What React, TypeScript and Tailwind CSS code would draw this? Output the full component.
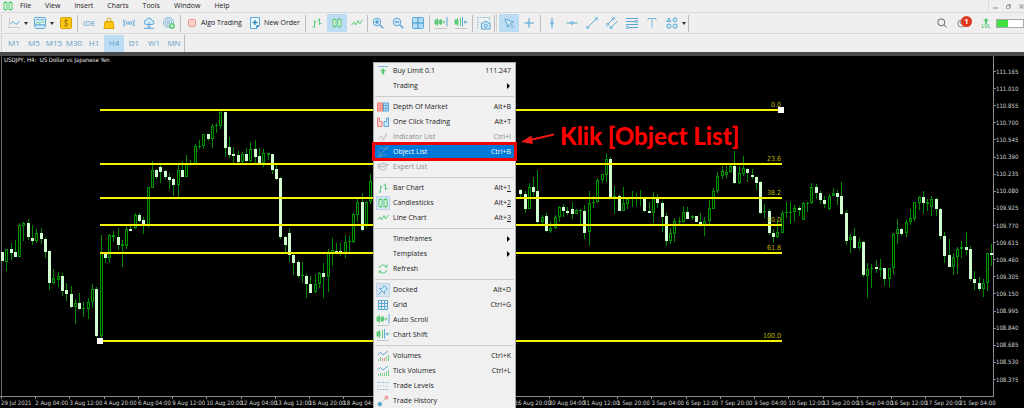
import type { ReactNode } from 'react';
import clsx from 'clsx';

// [high, low, body top, body bottom, falling]
type Candle = [number, number, number, number, 0 | 1];

const STEP = 4.283;
const PLOT_TOP = 56;
const HIDDEN = 34;

const firstCandles: Candle[] = [
  [252, 261, 252, 261, 1], [249, 271, 249, 262, 0], [243, 260, 249, 253, 1], [240, 257, 252, 257, 1],
  [223, 257, 225, 257, 0], [222, 241, 223, 226, 0], [219, 240, 223, 237, 1], [225, 245, 238, 241, 1],
  [229, 243, 233, 241, 0], [228, 244, 233, 239, 1], [237, 258, 239, 252, 1], [250, 290, 251, 283, 1],
  [269, 284, 278, 283, 0], [272, 287, 276, 280, 0], [273, 296, 276, 291, 1], [283, 301, 290, 294, 1],
  [286, 308, 294, 307, 1], [299, 324, 303, 307, 0], [293, 310, 303, 309, 1], [302, 317, 308, 309, 0],
  [298, 319, 302, 309, 0], [284, 308, 289, 302, 0], [287, 337, 289, 336, 1], [235, 338, 253, 336, 0],
  [252, 263, 253, 258, 1], [234, 263, 235, 258, 0], [231, 242, 235, 237, 0], [228, 250, 237, 245, 1],
  [240, 267, 244, 246, 0], [226, 249, 229, 246, 0], [225, 231, 229, 231, 1], [213, 229, 215, 228, 0],
  [213, 222, 215, 221, 1], [217, 234, 220, 225, 1], [187, 228, 187, 225, 0], [161, 188, 170, 188, 0],
  [169, 179, 170, 177, 1], [164, 183, 167, 172, 1], [170, 179, 171, 177, 1], [173, 189, 177, 180, 1],
  [178, 196, 179, 185, 1], [163, 197, 170, 185, 0], [161, 177, 170, 177, 1], [155, 177, 164, 177, 0],
  [160, 166, 163, 164, 0], [144, 164, 146, 164, 0], [140, 149, 146, 147, 0], [134, 149, 134, 146, 0],
  [134, 141, 134, 139, 1], [124, 148, 126, 139, 0], [123, 133, 125, 126, 0], [111, 129, 112, 126, 0],
  [112, 157, 112, 148, 1], [137, 158, 147, 155, 1], [147, 163, 154, 156, 1], [151, 164, 155, 162, 1],
  [152, 163, 154, 162, 0], [148, 162, 154, 161, 1], [142, 162, 149, 161, 0], [140, 163, 149, 157, 1],
  [148, 164, 156, 163, 1], [149, 167, 153, 163, 0], [153, 160, 153, 155, 0], [154, 174, 154, 170, 1],
  [165, 180, 169, 179, 1], [177, 239, 178, 237, 1], [236, 252, 237, 245, 1], [228, 262, 233, 255, 1],
  [253, 275, 255, 263, 1], [260, 278, 262, 276, 1], [262, 283, 275, 276, 0], [274, 298, 276, 284, 1],
  [276, 293, 284, 293, 1], [274, 293, 284, 292, 0], [272, 288, 273, 284, 0], [263, 298, 273, 277, 1],
  [249, 292, 252, 277, 0], [238, 266, 250, 253, 0], [243, 254, 251, 254, 1], [243, 256, 251, 254, 1],
  [235, 258, 242, 254, 0], [236, 253, 241, 242, 0], [213, 243, 214, 242, 0], [199, 222, 202, 215, 0],
  [193, 231, 202, 230, 1], [201, 228, 202, 226, 0], [174, 204, 181, 202, 0],
];

const lastCandles: Candle[] = [
  [189, 197, 190, 194, 1], [191, 213, 194, 209, 1], [183, 209, 187, 209, 0], [177, 196, 187, 192, 1],
  [170, 223, 191, 222, 1], [215, 225, 217, 222, 0], [213, 232, 216, 231, 1], [222, 233, 228, 231, 0],
  [215, 229, 217, 228, 0], [206, 222, 207, 217, 0], [204, 217, 207, 211, 1], [207, 215, 211, 213, 1],
  [202, 219, 209, 214, 1], [209, 214, 210, 214, 0], [209, 225, 210, 211, 0], [205, 239, 211, 233, 1],
  [191, 246, 203, 232, 0], [196, 208, 202, 203, 0], [178, 203, 180, 202, 0], [174, 183, 174, 180, 0],
  [153, 182, 159, 175, 0], [157, 198, 159, 198, 1], [186, 214, 196, 198, 0], [194, 211, 196, 211, 1],
  [187, 211, 203, 211, 0], [198, 209, 199, 204, 0], [191, 207, 198, 199, 0], [193, 206, 198, 199, 0],
  [190, 206, 198, 199, 0], [198, 212, 199, 211, 1], [202, 213, 211, 213, 1], [192, 223, 197, 213, 0],
  [194, 208, 197, 203, 1], [201, 232, 203, 217, 1], [213, 246, 216, 241, 1], [228, 244, 233, 241, 0],
  [218, 242, 221, 234, 0], [217, 224, 221, 222, 0], [206, 223, 212, 222, 0], [207, 219, 212, 219, 1],
  [215, 220, 216, 218, 0], [216, 222, 216, 222, 1], [213, 227, 222, 224, 1], [217, 236, 221, 225, 0],
  [200, 224, 208, 221, 0], [188, 209, 191, 209, 0], [172, 193, 176, 191, 0], [166, 179, 171, 176, 0],
  [166, 178, 172, 175, 0], [165, 173, 166, 172, 0], [151, 184, 166, 183, 1], [166, 184, 173, 183, 0],
  [156, 176, 168, 174, 0], [168, 182, 169, 173, 1], [169, 179, 175, 177, 1], [176, 190, 177, 183, 1],
  [181, 214, 182, 213, 1], [204, 218, 211, 212, 0], [209, 235, 211, 233, 1], [229, 243, 233, 237, 1],
  [220, 238, 232, 237, 0], [211, 233, 213, 233, 0], [202, 218, 212, 213, 0], [202, 224, 212, 213, 0],
  [205, 222, 208, 212, 0], [206, 216, 208, 210, 1], [202, 220, 203, 220, 0], [202, 212, 203, 204, 0],
  [183, 204, 187, 203, 0], [184, 199, 187, 193, 1], [191, 204, 193, 200, 1], [196, 208, 200, 204, 1],
  [194, 210, 196, 209, 0], [188, 196, 193, 196, 0], [190, 205, 193, 197, 1], [182, 215, 196, 214, 1],
  [210, 245, 213, 241, 1], [234, 253, 237, 240, 0], [228, 249, 236, 248, 1], [238, 250, 242, 248, 0],
  [241, 277, 242, 275, 1], [263, 298, 269, 276, 0], [264, 288, 268, 269, 0], [260, 273, 267, 269, 1],
  [259, 277, 268, 270, 0], [268, 286, 268, 279, 1], [268, 287, 268, 279, 0], [233, 275, 234, 268, 0],
  [219, 244, 229, 234, 0], [228, 236, 229, 234, 1], [220, 237, 222, 233, 0], [209, 225, 218, 222, 0],
  [202, 221, 202, 219, 0], [196, 210, 197, 203, 0], [191, 214, 197, 203, 1], [199, 211, 202, 204, 0],
  [196, 216, 199, 207, 0], [198, 216, 199, 209, 1], [208, 239, 209, 236, 1], [232, 263, 236, 256, 1],
  [239, 267, 255, 267, 1], [253, 275, 257, 267, 0], [247, 274, 249, 257, 0], [241, 258, 247, 249, 0],
  [232, 255, 247, 250, 1], [246, 281, 249, 279, 1], [271, 290, 279, 283, 1], [277, 291, 283, 289, 1],
  [279, 297, 283, 289, 0], [253, 291, 253, 283, 0], [244, 266, 253, 255, 1],
];

const fibLevels = [
  { label: '0.0', y: 110 },
  { label: '23.6', y: 164 },
  { label: '38.2', y: 198 },
  { label: '50.0', y: 225 },
  { label: '61.8', y: 253 },
  { label: '100.0', y: 341 },
];

const prices = [
  '111.165', '111.010', '110.855', '110.700', '110.545', '110.390', '110.235', '110.080', '109.925', '109.770',
  '109.615', '109.460', '109.305', '109.150', '108.995', '108.840', '108.685', '108.530', '108.375',
];

// the empty slots lie under the context menu
const times = [
  '29 Jul 2021', '2 Aug 04:00', '3 Aug 12:00', '4 Aug 20:00', '6 Aug 04:00', '9 Aug 12:00', '10 Aug 20:00',
  '12 Aug 04:00', '13 Aug 12:00', '16 Aug 20:00', '18 Aug 04:00', '', '', '',
  '', '26 Aug 20:00', '30 Aug 04:00', '31 Aug 12:00', '1 Sep 20:00', '3 Sep 04:00', '6 Sep 12:00',
  '7 Sep 20:00', '9 Sep 04:00', '10 Sep 12:00', '13 Sep 20:00', '15 Sep 04:00', '16 Sep 12:00', '17 Sep 20:00',
  '21 Sep 04:00',
];

const BLUE = '#5aa8d6';
const GREEN = '#5cca78';
const PALE = '#d3e9f8';

function Svg({ children, size = 12, stroke = BLUE }: { children: ReactNode; size?: 12 | 14; stroke?: string }) {
  return (
    <svg
      viewBox={size === 14 ? '0 0 14 14' : '0 0 12 12'}
      className={size === 14 ? 'size-[14px] shrink-0' : 'size-3 shrink-0'}
      fill="none"
      stroke={stroke}
      strokeWidth="1"
      aria-hidden="true"
    >
      {children}
    </svg>
  );
}

const icons = {
  lineChart: (
    <Svg>
      <path d="M1.500 1v10M0 10.500h12" stroke="#c3c3c3" strokeWidth=".8" />
      <path d="M2.500 7 5 4.500 8 7.500 11.500 4.500" />
    </Svg>
  ),
  screen: (
    <Svg size={14}>
      <rect x="1.500" y="1.500" width="11" height="7.500" rx="1" fill="#e4f3fc" />
      <path d="M2.500 4.500 5 3l2 1.500L9 3l2.500 1" />
      <path d="M2.500 7.500 5 6l2 1.500 2-2 2.500 1" stroke={GREEN} />
      <path d="M1.500 9c0 2.500 1 3.500 2.500 3.500h6c1.500 0 2.500-1 2.500-3.500z" fill={PALE} />
    </Svg>
  ),
  dollar: (
    <Svg stroke="#d9a400">
      <rect x=".5" y=".5" width="11" height="11" rx="1" fill="#fbc614" />
      <path d="M8 3.800C7.500 3 4.200 2.800 4.200 4.600 4.200 6.200 8 5.600 8 7.400 8 9.200 4.500 9 4 8M6 2v8" stroke="#a37c0a" strokeWidth=".9" />
    </Svg>
  ),
  bag: (
    <Svg stroke="#dba50a">
      <path d="M2 4.500h8l1 7H1z" fill="#fdc60f" />
      <path d="M4 6V3a2 2 0 0 1 4 0v3" />
    </Svg>
  ),
  signal: (
    <Svg>
      <circle cx="6" cy="6" r="1.200" />
      <path d="M4 4a3 3 0 0 0 0 4M8 4a3 3 0 0 1 0 4M2.300 3a5 5 0 0 0 0 6M9.700 3a5 5 0 0 1 0 6M.7 2.500a7 7 0 0 0 0 7M11.300 2.500a7 7 0 0 1 0 7" strokeWidth=".8" />
    </Svg>
  ),
  cloud: (
    <Svg>
      <path d="M3 7.500a2.300 2.300 0 0 1 0-4.500 3.200 3.200 0 0 1 6 .5 2 2 0 0 1 0 4z" fill={PALE} />
      <path d="M6 5.500V11M1 11.300h10M4.500 9.500 6 11l1.500-1.500" />
    </Svg>
  ),
  radar: (
    <Svg>
      <circle cx="5.500" cy="5.500" r="5" strokeWidth=".8" />
      <circle cx="5.500" cy="5.500" r="3" strokeWidth=".8" />
      <circle cx="5.500" cy="5.500" r="1" />
      <circle cx="9" cy="9" r="2.600" fill="#5fd47a" stroke="#43b85f" strokeWidth=".6" />
      <path d="M7.500 9h3M9 7.500v3" stroke="#fff" />
    </Svg>
  ),
  stop: (
    <Svg stroke="#e9978c">
      <rect x="2.500" y="2.500" width="7" height="7" rx="1" fill="#fbd0ca" />
    </Svg>
  ),
  newOrder: (
    <Svg>
      <path d="M1.500.5h9v8l-3 3h-6z" fill="#f2f9fe" />
      <path d="M3.500 5.500h5M6 3v5" strokeWidth="1.300" stroke="#2a84bd" />
      <path d="M7.500 11.500v-3h3z" fill="#2a84bd" />
    </Svg>
  ),
  bars: (
    <Svg stroke={GREEN}>
      <path d="M3.500 3.500v7M1.500 10h2M3.500 5h2M8.500 1.500v6.500M6.500 3h2M8.500 6.500h2" />
    </Svg>
  ),
  candles: (
    <Svg stroke={GREEN}>
      <path d="M3.500 1v10M8.500 1v10" />
      <rect x="2" y="2.500" width="3" height="7" fill="#d8f3df" />
      <rect x="7" y="2.500" width="3" height="7" fill="#d8f3df" />
    </Svg>
  ),
  zigzag: (
    <Svg stroke={GREEN}>
      <path d="M.5 8 3 5l1.500 3L7 3.500 8.500 7l3-4" />
    </Svg>
  ),
  zoomIn: (
    <Svg>
      <circle cx="5" cy="5" r="3.800" fill={PALE} />
      <path d="M8 8l3.300 3.300" strokeWidth="1.600" />
      <path d="M3 5h4M5 3v4" stroke="#2a84bd" />
    </Svg>
  ),
  zoomOut: (
    <Svg>
      <circle cx="5" cy="5" r="3.800" fill={PALE} />
      <path d="M8 8l3.300 3.300" strokeWidth="1.600" />
      <path d="M3 5h4" stroke="#2a84bd" />
    </Svg>
  ),
  tiles: (
    <Svg>
      <rect x=".5" y=".5" width="11" height="11" rx="1" fill="#b5dcf5" />
      <path d="M6 .5v11M.5 6h11" stroke="#3f93c8" />
    </Svg>
  ),
  autoScroll: (
    <Svg size={14} stroke={GREEN}>
      <path d="M1.500 3.500v5M3.500 2v8M6.500 3v6" />
      <path d="M1 4h3v4H1zM5.500 4h2v4h-2z" fill={GREEN} />
      <path d="M8 6h3M9.500 4.500 11 6 9.500 7.500" strokeWidth=".9" />
      <path d="M13 1v9.500" stroke={BLUE} />
      <path d="M1 12.500h12" stroke="#c6c6c6" />
    </Svg>
  ),
  chartShift: (
    <Svg size={14} stroke={GREEN}>
      <path d="M1.500 3.500v5M3.500 2v8M6.500 2v8" />
      <path d="M1 4h3v4H1z" fill={GREEN} />
      <path d="M8.500 1v9.500M13.500 6H10M11.500 4.500 10 6l1.500 1.500" stroke={BLUE} />
      <path d="M1 12.500h12" stroke="#c6c6c6" />
    </Svg>
  ),
  camera: (
    <Svg size={14}>
      <path d="M.8 12.500V1.500h12V5" strokeDasharray="1.500 1.200" strokeWidth=".8" />
      <path d="M4.500 7h2l1-1.500h2.500l1 1.500h2v6h-8.500z" fill={PALE} />
      <circle cx="8.800" cy="9.800" r="1.600" />
    </Svg>
  ),
  cursor: (
    <Svg>
      <path d="M2 2l8.500 3-3.200 1.300L10.500 9.500 9.300 10.700 6.200 7.500 5 10.500z" fill={PALE} />
    </Svg>
  ),
  crosshair: (
    <Svg>
      <path d="M6 1v10M1 6h10" />
      <circle cx="6" cy="6" r="1.200" fill={PALE} />
    </Svg>
  ),
  vline: (
    <Svg>
      <path d="M6 .5v11" />
      <circle cx="6" cy="6" r="1.300" fill={PALE} />
    </Svg>
  ),
  hline: (
    <Svg>
      <path d="M.5 6h11" />
      <circle cx="6" cy="6" r="1.300" fill={PALE} />
    </Svg>
  ),
  trend: (
    <Svg>
      <path d="M1.500 10.500l9-9" />
      <circle cx="1.500" cy="10.500" r="1.100" fill={PALE} />
      <circle cx="10.500" cy="1.500" r="1.100" fill={PALE} />
    </Svg>
  ),
  channel: (
    <Svg>
      <path d="M1.500 7.500l6-6M5 10.500 11.500 4" />
      <circle cx="1.500" cy="7.500" r="1.100" fill={PALE} />
      <circle cx="7.500" cy="1.500" r="1.100" fill={PALE} />
      <circle cx="5" cy="10.500" r="1.100" fill={PALE} />
    </Svg>
  ),
  fib: (
    <Svg>
      <path d="M0 1.500h12M0 4.500h9M0 7.500h12M3 10.500h9" />
      <circle cx="10.500" cy="4.500" r="1.200" fill={PALE} />
      <circle cx="1.500" cy="10.500" r="1.200" fill={PALE} />
    </Svg>
  ),
  textTool: (
    <Svg>
      <path d="M2 3V1.500h8V3M6 1.500V10.500" stroke="#7fb4d6" />
    </Svg>
  ),
  shapes: (
    <Svg>
      <path d="M.8 4.500 2.800 1l2 3.500z" fill={PALE} />
      <circle cx="9" cy="2.800" r="1.900" fill={PALE} />
      <rect x="1" y="7.200" width="3.800" height="3.800" rx="1" fill={PALE} />
      <rect x="7.200" y="7.200" width="3.800" height="3.800" rx="1" fill={PALE} />
    </Svg>
  ),
  limit: (
    <Svg stroke={GREEN}>
      <path d="M1 1.500h10" stroke="#7fb9de" />
      <path d="M6 3.500l2.500 2.500H7v3H5V6H3.500z" fill={GREEN} strokeWidth=".5" />
    </Svg>
  ),
  depth: (
    <Svg>
      <rect x=".5" y="2" width="5" height="8" fill="#fbb9b2" stroke="#ef7d73" />
      <rect x="6.500" y="2" width="5" height="8" fill="#b8defa" />
      <path d="M.5 4.600h5M.5 7.300h5M3 2v8" stroke="#ef7d73" strokeWidth=".8" />
      <path d="M6.500 4.600h5M6.500 7.300h5M9 2v8" strokeWidth=".8" />
    </Svg>
  ),
  oneClick: (
    <Svg>
      <path d="M.5 2v8.500h4.500v-5H2.500V2z" fill="#fbd4d0" stroke="#ef7d73" />
      <path d="M11.500 2v8.500H7v-5h2.500V2z" fill="#c6e5fb" />
    </Svg>
  ),
  indicator: (
    <Svg stroke="#c9c9c9">
      <path d="M1 9 4 5l2 3 4-6M4 10l3-2 3-4" />
    </Svg>
  ),
  objects: (
    <Svg stroke="#4f93c4">
      <path d="M2 2h7L3 9h7M1.500 10.500l9-9M1 5l4 6" />
      <circle cx="10" cy="2" r="1" />
      <circle cx="2" cy="10" r="1" />
    </Svg>
  ),
  expert: (
    <Svg stroke="#bcbcbc">
      <path d="M.5 4 6 2l5.500 2L6 6z" fill="#e2e2e2" />
      <path d="M3 5.500V8c1.500 1.300 4.500 1.300 6 0V5.500M1.500 4.500V8" />
    </Svg>
  ),
  refresh: (
    <Svg stroke={GREEN}>
      <path d="M2 5A4.200 4.200 0 0 1 9.500 3.800M10 7A4.200 4.200 0 0 1 2.500 8.200M10 1.500V4H7.500M2 10.500V8h2.500" />
    </Svg>
  ),
  pin: (
    <Svg>
      <path d="M7 1.500 10.500 5 9 5.500 7.500 7.500v2L2.500 4.500h2L6.500 3zM4.500 7.500 1 11" fill={PALE} />
    </Svg>
  ),
  grid: (
    <Svg>
      <path d="M1.500 1v10M4.500 1v10M7.500 1v10M10.500 1v10M1 1.500h10M1 4.500h10M1 7.500h10M1 10.500h10" />
    </Svg>
  ),
  volumes: (
    <Svg>
      <path d="M.5 5 3.500 2.500 6 5l5-4" />
      <path d="M1.500 11V9M3.500 11V7M9.500 11V6.500M11.500 11V5" stroke="#7ad08e" />
      <path d="M5.500 11V8M7.500 11V8" stroke="#f08a80" />
    </Svg>
  ),
  ticks: (
    <Svg>
      <path d="M.5 5 3.500 2.500 6 5l5-4" />
      <path d="M1.500 11V9M3.500 11V8M5.500 11V8.500M7.500 11V7.500M9.500 11V6.500M11.500 11V5" stroke="#7ad08e" />
    </Svg>
  ),
  levels: (
    <Svg>
      <path d="M.5 2.500h11M.5 9.500h11" strokeDasharray="1.500 1" stroke="#7fb9de" />
      <path d="M.5 6h11" strokeDasharray="1.500 1" stroke="#b8d8ec" />
    </Svg>
  ),
  history: (
    <Svg>
      <path d="M2.500 9.500l7-7" strokeDasharray="2 1" stroke="#b0b0b0" />
      <circle cx="2.800" cy="9.200" r="1.700" fill="#4a9fd0" />
      <circle cx="9.500" cy="2.500" r="1.400" fill="#fbb9b2" stroke="#ef7d73" />
    </Svg>
  ),
};

type IconName = keyof typeof icons;

function Tool({ icon, label, active }: { icon: IconName; label: string; active?: boolean }) {
  return (
    <button
      type="button"
      aria-label={label}
      className={clsx('flex h-[18px] w-5 shrink-0 items-center justify-center', active && 'bg-[#bcdcf4]')}
    >
      {icons[icon]}
    </button>
  );
}

function Caret() {
  return (
    <svg viewBox="0 0 4 3" className="h-[3px] w-1 shrink-0 fill-[#333]" aria-hidden="true">
      <path d="M0 0h4L2 3z" />
    </svg>
  );
}

function DropTool({ icon, label }: { icon: IconName; label: string }) {
  return (
    <button type="button" aria-label={label} className="flex h-[18px] w-[26px] shrink-0 items-center">
      <span className="flex w-5 justify-center">{icons[icon]}</span>
      <Caret />
    </button>
  );
}

function Divider({ tight }: { tight?: boolean }) {
  return <span className={clsx('h-[17px] w-px shrink-0 bg-[#bdbdbd]', !tight && 'mx-px')} />;
}

function Grip() {
  return <span className="mx-px h-4 w-0.5 shrink-0 border-l border-dotted border-[#b5b5b5]" />;
}

function MenuBar() {
  return (
    <header className="flex h-[13px] items-center border-b border-[#d9d9d9] pl-[2px]">
      <span className="w-[18px]">{icons.candles}</span>
      <nav className="flex flex-1 gap-[14px]">
        {['File', 'View', 'Insert', 'Charts', 'Tools', 'Window', 'Help'].map((item) => (
          <button key={item} type="button">{item}</button>
        ))}
      </nav>
      <div className="flex h-full items-center gap-2 border-l border-[#dcdcdc] pl-1 text-[#a5a5a5]">
        <button type="button" aria-label="Minimize">
          <svg viewBox="0 0 5 5" className="size-[5px]" fill="none" stroke="currentColor" strokeWidth="1.300">
            <path d="M0 4h5" />
          </svg>
        </button>
        <button type="button" aria-label="Restore">
          <svg viewBox="0 0 5 5" className="size-[5px]" fill="none" stroke="currentColor">
            <path d="M.5 1.500h3v3h-3zM1.500.5h3v3" />
          </svg>
        </button>
        <button type="button" aria-label="Close">
          <svg viewBox="0 0 5 5" className="size-[5px]" fill="none" stroke="currentColor" strokeWidth="1.200">
            <path d="M.5.5l4 4M4.500.5l-4 4" />
          </svg>
        </button>
      </div>
    </header>
  );
}

function Toolbar() {
  return (
    <div className="flex h-5 items-center">
      <Grip />
      <DropTool icon="lineChart" label="Chart type" />
      <DropTool icon="screen" label="Templates" />
      <Tool icon="dollar" label="Symbols" />
      <Divider />
      <button type="button" className="w-5 shrink-0 text-center text-[8px] text-[#5c9fc8]">IDE</button>
      <Tool icon="bag" label="Market" />
      <Tool icon="signal" label="Signals" />
      <Tool icon="cloud" label="Virtual hosting" />
      <Tool icon="radar" label="Alerts" />
      <Divider />
      <button type="button" className="flex w-[63px] shrink-0 items-center gap-[3px] pl-1 whitespace-nowrap">
        {icons.stop}
        Algo Trading
      </button>
      <button type="button" className="flex w-[59px] shrink-0 items-center gap-[3px] pl-1 whitespace-nowrap">
        {icons.newOrder}
        New Order
      </button>
      <Divider />
      <Tool icon="bars" label="Bar chart" />
      <Tool icon="candles" label="Candlesticks" active />
      <Tool icon="zigzag" label="Line chart" />
      <Divider tight />
      <Tool icon="zoomIn" label="Zoom in" />
      <Tool icon="zoomOut" label="Zoom out" />
      <Tool icon="tiles" label="Tile windows" />
      <Divider />
      <Tool icon="autoScroll" label="Auto scroll" />
      <Tool icon="chartShift" label="Chart shift" />
      <Divider />
      <Tool icon="camera" label="Screenshot" />
      <Divider tight />
      <Grip />
      <Tool icon="cursor" label="Cursor" active />
      <Tool icon="crosshair" label="Crosshair" />
      <Divider />
      <Tool icon="vline" label="Vertical line" />
      <Tool icon="hline" label="Horizontal line" />
      <Tool icon="trend" label="Trendline" />
      <Tool icon="channel" label="Channel" />
      <Tool icon="fib" label="Fibonacci" />
      <Tool icon="textTool" label="Text" />
      <DropTool icon="shapes" label="Shapes" />
      <Divider tight />
      <div className="ml-auto flex items-center">
        <button type="button" aria-label="Search" className="mr-[10px]">
          <svg viewBox="0 0 10 10" className="size-[10px]" fill="none" stroke="#666">
            <circle cx="4.300" cy="4.300" r="3.500" />
            <path d="M7 7l2.500 2.500" />
          </svg>
        </button>
        <button type="button" aria-label="Notifications" className="relative mr-[10px] w-[14px]">
          <svg viewBox="0 0 10 10" className="size-[9px]" fill="none" stroke="#777">
            <circle cx="5" cy="5" r="4" />
            <circle cx="5" cy="4" r="1.500" />
          </svg>
          <span className="absolute -top-[3px] left-1 flex size-[11px] items-center justify-center rounded-full bg-[#e0361c] text-[7px] leading-none font-bold text-white">
            1
          </span>
        </button>
        <div className="mr-[5px] flex w-[10px] flex-col items-center">
          <svg viewBox="0 0 6 6" className="size-[6px] fill-[#5cca78]" aria-hidden="true">
            <path d="M3 0l3 3H4v3H2V3H0z" />
          </svg>
          <span className="text-[5px] leading-[5px] font-bold text-[#5cca78]">LVL</span>
        </div>
        <div className="flex h-[9px] w-[28px] border border-[#a9a9a9] bg-white">
          <span className="h-full w-[11px] bg-[#3fe03f]" />
        </div>
      </div>
    </div>
  );
}

function Timeframes() {
  return (
    <div className="flex h-[19px] items-center border-t border-[#d9d9d9] text-[8px] text-[#5c9fc8]">
      <Grip />
      {['M1', 'M5', 'M15', 'M30', 'H1', 'H4', 'D1', 'W1', 'MN'].map((frame) => (
        <button
          key={frame}
          type="button"
          className={clsx('h-[17px] w-5 shrink-0 text-center', frame === 'H4' && 'bg-[#bcdcf4]')}
        >
          {frame}
        </button>
      ))}
      <Divider tight />
    </div>
  );
}

function CandleShape({ candle, index }: { candle: Candle; index: number }) {
  const [high, low, top, bottom, falling] = candle;
  const x = Math.round(2 + index * STEP);
  const height = Math.max(bottom - top, 1);
  return (
    <g>
      <rect x={x} y={high - PLOT_TOP} width={1} height={low - high} fill="#008a00" />
      {falling ? (
        <rect x={x - 1} y={top - PLOT_TOP} width={3} height={height} fill="#d2ffd2" />
      ) : (
        <>
          <rect x={x - 1} y={top - PLOT_TOP} width={3} height={height} fill="#009400" />
          {height > 2 && <rect x={x} y={top - PLOT_TOP + 1} width={1} height={height - 2} fill="#001800" />}
        </>
      )}
    </g>
  );
}

function Plot() {
  return (
    <svg viewBox="0 0 993 340" className="block w-full" role="img" aria-label="USDJPY H4 candlestick chart">
      <path d="M1.500 340V.5" stroke="#6d6d6d" />
      {firstCandles.map((candle, i) => (
        <CandleShape key={i} candle={candle} index={i} />
      ))}
      {lastCandles.map((candle, i) => (
        <CandleShape key={i} candle={candle} index={i + firstCandles.length + HIDDEN} />
      ))}
      {fibLevels.map(({ label, y }) => (
        <g key={label}>
          <rect x={100} y={y - PLOT_TOP - 1} width={682} height={2} fill="#f4f400" />
          <text
            x={781}
            y={y - PLOT_TOP - 3}
            textAnchor="end"
            fill="#b8b800"
            className="font-['DejaVu_Sans_Condensed','DejaVu_Sans',sans-serif] text-[7px]"
          >
            {label}
          </text>
        </g>
      ))}
      <rect x={97} y={282} width={6} height={6} fill="#fff" />
      <rect x={778} y={51} width={6} height={6} fill="#fff" />
    </svg>
  );
}

interface Entry {
  label: string;
  icon?: IconName;
  shortcut?: string;
  hotkey?: string;
  submenu?: boolean;
  disabled?: boolean;
  checked?: boolean;
  selected?: boolean;
}

const menuGroups: Entry[][] = [
  [
    { label: 'Buy Limit 0.1', icon: 'limit', shortcut: '111.247' },
    { label: 'Trading', submenu: true },
  ],
  [
    { label: 'Depth Of Market', icon: 'depth', shortcut: 'Alt+B' },
    { label: 'One Click Trading', icon: 'oneClick', shortcut: 'Alt+T' },
    { label: 'Indicator List', icon: 'indicator', shortcut: 'Ctrl+I', disabled: true },
    { label: 'Object List', icon: 'objects', shortcut: 'Ctrl+B', selected: true },
    { label: 'Expert List', icon: 'expert', disabled: true },
  ],
  [
    { label: 'Bar Chart', icon: 'bars', shortcut: 'Alt+', hotkey: '1' },
    { label: 'Candlesticks', icon: 'candles', shortcut: 'Alt+', hotkey: '2', checked: true },
    { label: 'Line Chart', icon: 'zigzag', shortcut: 'Alt+', hotkey: '3' },
  ],
  [
    { label: 'Timeframes', submenu: true },
    { label: 'Templates', submenu: true },
    { label: 'Refresh', icon: 'refresh' },
  ],
  [
    { label: 'Docked', icon: 'pin', shortcut: 'Alt+D', checked: true },
    { label: 'Grid', icon: 'grid', shortcut: 'Ctrl+G' },
    { label: 'Auto Scroll', icon: 'autoScroll' },
    { label: 'Chart Shift', icon: 'chartShift' },
  ],
  [
    { label: 'Volumes', icon: 'volumes', shortcut: 'Ctrl+K' },
    { label: 'Tick Volumes', icon: 'ticks', shortcut: 'Ctrl+L' },
    { label: 'Trade Levels', icon: 'levels' },
    { label: 'Trade History', icon: 'history' },
  ],
];

function MenuRow({ entry }: { entry: Entry }) {
  return (
    <button
      type="button"
      disabled={entry.disabled}
      className={clsx(
        'relative flex h-[15px] w-full items-center pr-1 pl-0.5 text-left',
        entry.disabled && 'text-[#8e8e8e]',
        entry.selected ? 'bg-[#0078d7] text-white' : !entry.disabled && 'text-[#222]',
      )}
    >
      <span
        className={clsx(
          'mr-[3px] flex size-[14px] shrink-0 items-center justify-center',
          entry.checked && 'bg-[#d5e5f4] ring-1 ring-[#bcd3e8] ring-inset',
        )}
      >
        {entry.icon && icons[entry.icon]}
      </span>
      <span className="flex-1">{entry.label}</span>
      {entry.shortcut && (
        <span>
          {entry.shortcut}
          {entry.hotkey && <u>{entry.hotkey}</u>}
        </span>
      )}
      {entry.submenu && (
        <svg viewBox="0 0 3 6" className="mr-px h-[6px] w-[3px] fill-black" aria-hidden="true">
          <path d="M0 0l3 3-3 3z" />
        </svg>
      )}
      {entry.selected && <span className="absolute -inset-x-[2px] -inset-y-[2px] border-3 border-[#f00000]" />}
    </button>
  );
}

function ContextMenu() {
  return (
    <div className="absolute top-[6px] left-[373px] w-[143px] border border-[#a8a8a8] bg-[#f0f0f0]">
      {menuGroups.map((group, i) => (
        <div key={group[0].label}>
          {i > 0 && (
            <div className="flex h-[6px] items-center px-px">
              <span className="h-px w-full bg-[#cccccc]" />
            </div>
          )}
          {group.map((entry) => (
            <MenuRow key={entry.label} entry={entry} />
          ))}
        </div>
      ))}
    </div>
  );
}

function Annotation() {
  return (
    <div className="absolute top-[66px] left-[521px] flex items-center gap-[6px]">
      <svg viewBox="0 0 33 12" className="mt-[6px] h-3 w-[33px]" aria-hidden="true">
        <path d="M33 1.500 9 7" stroke="#f01818" strokeWidth="2" />
        <path d="M0 9 10.500 2.500 12 11z" fill="#f01818" />
      </svg>
      <p className="font-['Lato',sans-serif] text-[24px] leading-[28px] font-black whitespace-nowrap text-[#ff0000]">
        Klik [Object List]
      </p>
    </div>
  );
}

export default function App() {
  return (
    <div className="overflow-hidden bg-[#efefef] font-['Open_Sans','Noto_Sans',sans-serif] text-[7px] leading-[12px] text-[#222]">
      <MenuBar />
      <Toolbar />
      <Timeframes />
      <main className="relative overflow-hidden border-t-4 border-[#4a4a4a] bg-black">
        <h1 className="absolute top-0 left-1 font-['DejaVu_Sans_Condensed','DejaVu_Sans',sans-serif] text-[6px] leading-[8px] whitespace-pre text-[#e4e4e4]">
          USDJPY, H4:  US Dollar vs Japanese Yen
        </h1>
        <div className="flex">
          <div className="min-w-0 flex-1">
            <Plot />
          </div>
          <ul className="flex w-[31px] shrink-0 flex-col border-l border-[#8c8c8c] pt-[7px] pb-2 font-['DejaVu_Sans_Condensed','DejaVu_Sans',sans-serif] text-[6px] text-[#d5d5d5]">
            {prices.map((price) => (
              <li key={price} className="flex flex-1 items-center">
                <span className="h-px w-0.5 bg-[#8c8c8c]" />
                {price}
              </li>
            ))}
          </ul>
        </div>
        <ol className="mr-[30px] flex h-3 border-t border-[#8c8c8c] pl-px font-['DejaVu_Sans_Condensed','DejaVu_Sans',sans-serif] text-[6px] leading-[8px] text-[#d5d5d5]">
          {times.map((time, i) => (
            <li key={i} className="w-0 flex-1 whitespace-nowrap">
              <span className="block h-0.5 w-px bg-[#8c8c8c]" />
              {time}
            </li>
          ))}
        </ol>
        <ContextMenu />
        <Annotation />
      </main>
    </div>
  );
}
